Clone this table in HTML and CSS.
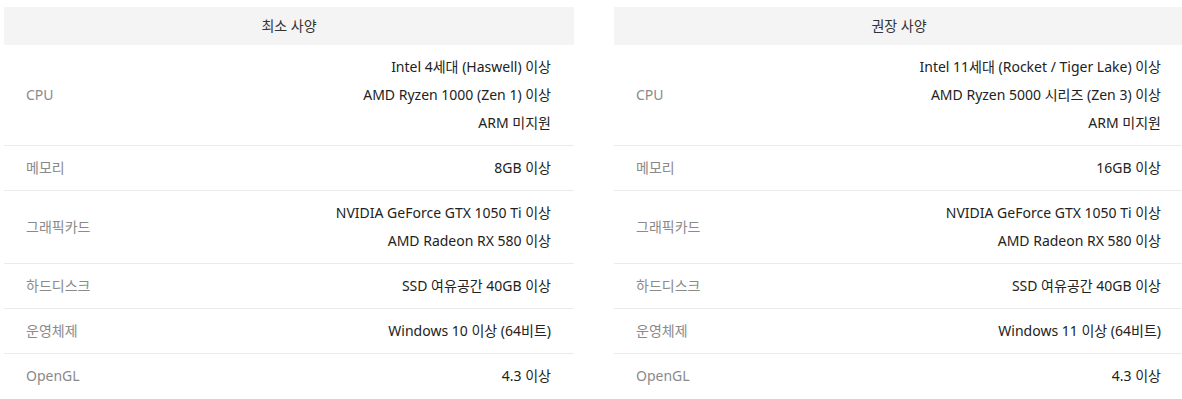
FILE: index.html
```html
<!DOCTYPE html>
<html lang="ko">
<head>
<meta charset="utf-8">
<link rel="stylesheet" href="styles.css">
</head>
<body>
<div class="specs">
  <table class="spec">
    <thead><tr><th colspan="2">최소 사양</th></tr></thead>
    <tbody>
      <tr><td class="label">CPU</td><td class="value">Intel 4세대 (Haswell) 이상<br>AMD Ryzen 1000 (Zen 1) 이상<br>ARM 미지원</td></tr>
      <tr><td class="label">메모리</td><td class="value">8GB 이상</td></tr>
      <tr><td class="label">그래픽카드</td><td class="value">NVIDIA GeForce GTX 1050 Ti 이상<br>AMD Radeon RX 580 이상</td></tr>
      <tr><td class="label">하드디스크</td><td class="value">SSD 여유공간 40GB 이상</td></tr>
      <tr><td class="label">운영체제</td><td class="value">Windows 10 이상 (64비트)</td></tr>
      <tr><td class="label">OpenGL</td><td class="value">4.3 이상</td></tr>
    </tbody>
  </table>
  <table class="spec">
    <thead><tr><th colspan="2">권장 사양</th></tr></thead>
    <tbody>
      <tr><td class="label">CPU</td><td class="value">Intel 11세대 (Rocket / Tiger Lake) 이상<br>AMD Ryzen 5000 시리즈 (Zen 3) 이상<br>ARM 미지원</td></tr>
      <tr><td class="label">메모리</td><td class="value">16GB 이상</td></tr>
      <tr><td class="label">그래픽카드</td><td class="value">NVIDIA GeForce GTX 1050 Ti 이상<br>AMD Radeon RX 580 이상</td></tr>
      <tr><td class="label">하드디스크</td><td class="value">SSD 여유공간 40GB 이상</td></tr>
      <tr><td class="label">운영체제</td><td class="value">Windows 11 이상 (64비트)</td></tr>
      <tr><td class="label">OpenGL</td><td class="value">4.3 이상</td></tr>
    </tbody>
  </table>
</div>
</body>
</html>
```
FILE: styles.css
```css
html, body {
  margin: 0;
  padding: 0;
  background: #fff;
  overflow: hidden;
}
body {
  font-family: "Noto Sans", "Noto Sans CJK KR", sans-serif;
  font-size: 14px;
  color: #222;
}
.specs {
  display: flex;
  gap: 40px;
  padding: 7px 0 0 4px;
  width: 1180px;
}
.spec {
  width: 570px;
  flex: 0 0 570px;
  border-collapse: collapse;
}
.spec th {
  height: 38px;
  padding: 0;
  background: #f4f4f4;
  font-weight: 400;
  color: #333;
  text-align: center;
  line-height: 38px;
}
.spec td {
  padding: 8px 0;
  line-height: 28px;
  border-bottom: 1px solid #ebebeb;
  vertical-align: middle;
}
.spec tbody tr:last-child td {
  border-bottom: 0;
}
.spec td.label {
  padding-left: 22px;
  color: #8a8a8a;
  text-align: left;
}
.spec td.value {
  padding-right: 23px;
  text-align: right;
  color: #222;
}
```
